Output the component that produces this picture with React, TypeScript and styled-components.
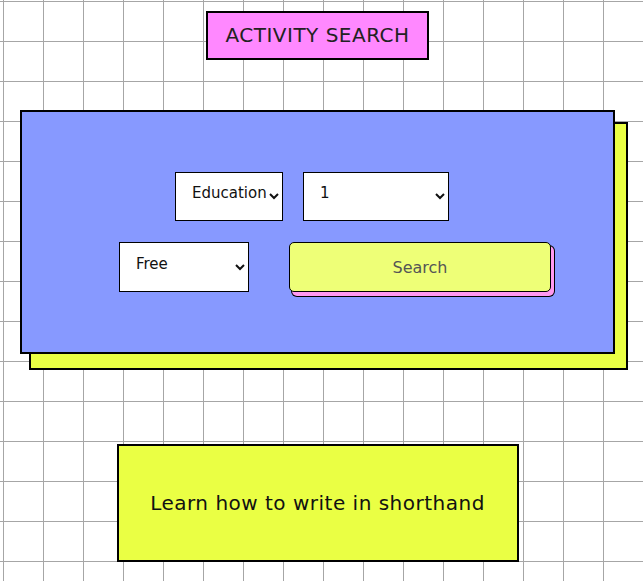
import styled, { createGlobalStyle } from "styled-components";

const GlobalStyle = createGlobalStyle`
    html, body {
        margin: 0;
        padding: 0;
    }
    body {
        min-height: 100vh;
        font-family: "DejaVu Sans", "Open Sans", sans-serif;
        color: #1a1a1a;
        // graph paper look
        background-color: #ffffff;
        background-image:
            linear-gradient(to right, #a6a6a6 1px, transparent 1px),
            linear-gradient(to bottom, #a6a6a6 1px, transparent 1px);
        background-size: 40px 40px;
        background-position: 3px 1px;
    }
`;

const Page = styled.main`
    display: flex;
    flex-direction: column;
    align-items: center;
    padding: 11px 28px 19px 20px;
`;

const Title = styled.h1`
    margin: 0;
    padding: 0 17px;
    line-height: 45px;
    font-size: 20px;
    font-weight: normal;
    letter-spacing: 0.5px;
    color: #222;
    background-color: #ff88ff;
    border: 2px solid #000;
`;

const Card = styled.section`
    align-self: stretch;
    margin-top: 50px;
    padding: 60px 0;
    display: flex;
    flex-direction: column;
    gap: 21px;
    background-color: #8799ff;
    border: 2px solid #000;
    // yellow block behind the card, with its own outline
    box-shadow: 11px 14px 0 0 #eaff44, 11px 14px 0 2px #000;
`;

const Row = styled.div<{ $indent: number; $gap: number }>`
    display: flex;
    align-items: flex-start;
    gap: ${(props) => props.$gap}px;
    padding-left: ${(props) => props.$indent}px;
`;

const Select = styled.select<{ $width: number; $height: number }>`
    width: ${(props) => props.$width}px;
    height: ${(props) => props.$height}px;
    padding: 0 0 7px 12px;
    font-family: "DejaVu Sans", "Open Sans", sans-serif;
    font-size: 15px;
    color: #111;
    background-color: #fff;
    border: 1px solid #000;
    border-radius: 0;
`;

const SearchButton = styled.button`
    width: 262px;
    height: 50px;
    font-family: "DejaVu Sans", "Open Sans", sans-serif;
    font-size: 16px;
    color: #555;
    background-color: #eeff77;
    border: 1px solid #000;
    border-radius: 5px;
    box-shadow: 3px 4px 0 0 #ff99f0, 3px 4px 0 1px #000;
    cursor: pointer;
`;

const Result = styled.div`
    margin-top: 90px;
    width: 398px;
    height: 114px;
    display: flex;
    align-items: center;
    justify-content: center;
    font-size: 20px;
    letter-spacing: 0.5px;
    color: #111;
    background-color: #eaff44;
    border: 2px solid #000;
`;

export default function App() {
    return (
        <>
            <GlobalStyle />
            <Page>
                <Title>ACTIVITY SEARCH</Title>
                <Card>
                    <Row $indent={153} $gap={20}>
                        <Select $width={108} $height={49} defaultValue="education">
                            <option value="education">Education</option>
                            <option value="recreational">Recreational</option>
                            <option value="social">Social</option>
                            <option value="diy">DIY</option>
                            <option value="charity">Charity</option>
                            <option value="cooking">Cooking</option>
                            <option value="relaxation">Relaxation</option>
                            <option value="music">Music</option>
                            <option value="busywork">Busywork</option>
                        </Select>
                        <Select $width={146} $height={49} defaultValue="1">
                            <option value="1">1</option>
                            <option value="2">2</option>
                            <option value="3">3</option>
                            <option value="4">4</option>
                        </Select>
                    </Row>
                    <Row $indent={97} $gap={40}>
                        <Select $width={130} $height={50} defaultValue="free">
                            <option value="free">Free</option>
                            <option value="cheap">Cheap</option>
                            <option value="pricey">Pricey</option>
                        </Select>
                        <SearchButton type="button">Search</SearchButton>
                    </Row>
                </Card>
                <Result>Learn how to write in shorthand</Result>
            </Page>
        </>
    );
}
